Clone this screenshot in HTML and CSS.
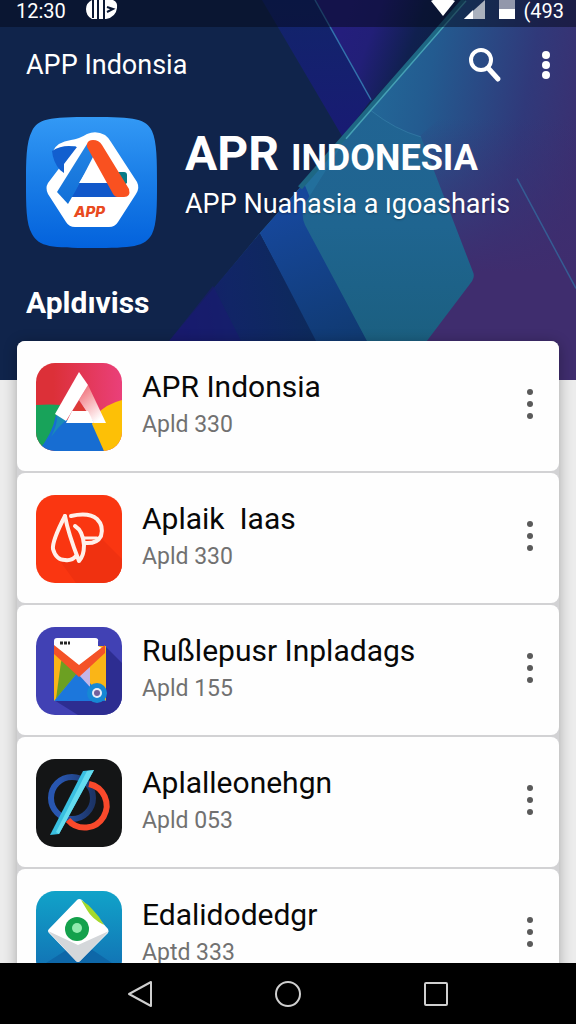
FILE: index.html
```html
<!DOCTYPE html>
<html lang="id">
<head>
  <meta charset="UTF-8">
  <meta name="viewport" content="width=device-width, initial-scale=1">
  <title>APP Indonsia</title>
  <link rel="stylesheet" href="styles.css">
</head>
<body>
  <main class="content">
    <header class="hero">
      <svg class="hero-bg" viewBox="0 0 576 419" preserveAspectRatio="none" aria-hidden="true">
        <defs>
          <linearGradient id="right" x1="330" y1="150" x2="576" y2="190" gradientUnits="userSpaceOnUse">
            <stop offset="0" stop-color="#226f9c"/>
            <stop offset="0.35" stop-color="#235b90"/>
            <stop offset="0.75" stop-color="#30397a"/>
            <stop offset="1" stop-color="#3b2f70"/>
          </linearGradient>
          <linearGradient id="purple" x1="0" y1="130" x2="0" y2="300" gradientUnits="userSpaceOnUse">
            <stop offset="0" stop-color="#3c2d70" stop-opacity="0"/>
            <stop offset="1" stop-color="#3f2d6e"/>
          </linearGradient>
          <linearGradient id="dark" x1="340" y1="40" x2="430" y2="70" gradientUnits="userSpaceOnUse">
            <stop offset="0" stop-color="#241e7c"/>
            <stop offset="0.3" stop-color="#221f78"/>
            <stop offset="0.75" stop-color="#10204f"/>
            <stop offset="1" stop-color="#0e2148"/>
          </linearGradient>
          <linearGradient id="band" x1="0" y1="0" x2="0" y2="160" gradientUnits="userSpaceOnUse">
            <stop offset="0" stop-color="#11256a"/>
            <stop offset="1" stop-color="#191a74"/>
          </linearGradient>
          <linearGradient id="teal" x1="0" y1="120" x2="0" y2="380" gradientUnits="userSpaceOnUse">
            <stop offset="0" stop-color="#216493"/>
            <stop offset="0.5" stop-color="#1f6590"/>
            <stop offset="1" stop-color="#1b5f80"/>
          </linearGradient>
          <linearGradient id="strip" x1="280" y1="240" x2="340" y2="380" gradientUnits="userSpaceOnUse">
            <stop offset="0" stop-color="#16479a"/>
            <stop offset="1" stop-color="#103a72"/>
          </linearGradient>
          <linearGradient id="low" x1="180" y1="350" x2="310" y2="330" gradientUnits="userSpaceOnUse">
            <stop offset="0" stop-color="#171a6a"/>
            <stop offset="0.4" stop-color="#112566"/>
            <stop offset="1" stop-color="#0d2a5c"/>
          </linearGradient>
        </defs>
        <rect width="576" height="419" fill="#10244b"/>
        <path d="M262 0H315L371 110L343 152Z" fill="url(#band)"/>
        <path d="M315 0H465L371 112Z" fill="url(#dark)"/>
        <path d="M465 0H576V419H168V380L260 257Z" fill="url(#right)"/>
        <path d="M420 150L440 130H576V419H420Z" fill="url(#purple)"/>
        <path d="M260 257L320 380H166Z" fill="url(#low)"/>
        <path d="M213 315L166 380H243Z" fill="#191a70" opacity="0.6"/>
        <path d="M260 257L304 202L372 380H318Z" fill="url(#strip)"/>
        <path d="M371 122Q395 143 421 151L473 300Q475 305 472 310L424 380H369L305 248Q301 239 304 226L345 154Z" fill="url(#teal)"/>
        <path d="M371 122Q395 143 421 151" fill="none" stroke="#3a86ac" opacity="0.6"/>
        <path d="M315 0L371 110" stroke="#3273ac" stroke-width="1.5"/>
        <path d="M464 0L300 207" stroke="#1e6784" stroke-width="5"/>
        <path d="M466 1L346 153" stroke="#46a1b6" stroke-width="1.5"/>
        <path d="M517 197L576 318" stroke="#355d94" stroke-width="1.5"/>
      </svg>

      <div class="status-bar">
        <span>12:30</span>
        <svg width="32" height="20" viewBox="0 0 32 20">
          <path d="M6 0H27Q32 2 31 8Q30 17 20 19H6Q0 16 0 9Q0 3 6 0Z" fill="#fff"/>
          <path d="M7 0V18M12 0V19M18 0V19" stroke="#0b1833" stroke-width="2"/>
          <path d="M21 7L27 9L21 12" fill="none" stroke="#0b1833" stroke-width="2"/>
        </svg>
        <svg class="status-signals" width="84" height="20" viewBox="0 0 84 20">
          <path d="M0 1L2 0H22L24 1L12 16Z" fill="#fff"/>
          <path d="M33 19L54 0V19Z" fill="#aab1bd"/>
          <path d="M33 19L42 10V19Z" fill="#fff"/>
          <path d="M68 0H84V19H68Z" fill="#9297ab"/>
          <path d="M68 9H84V19H68Z" fill="#fff"/>
        </svg>
        <span>(493</span>
      </div>

      <nav class="app-bar">
        <span class="app-name">APP Indonsia</span>
        <button class="icon-btn" aria-label="Cari">
          <svg width="34" height="36" viewBox="0 0 34 36">
            <circle cx="13" cy="13" r="10" fill="none" stroke="#fff" stroke-width="4"/>
            <path d="M20 21L30 32" stroke="#fff" stroke-width="5" stroke-linecap="round"/>
          </svg>
        </button>
        <button class="icon-btn" aria-label="Menu">
          <svg width="10" height="30" viewBox="0 0 10 30" fill="#fff">
            <circle cx="5" cy="5" r="4"/><circle cx="5" cy="15" r="4"/><circle cx="5" cy="25" r="4"/>
          </svg>
        </button>
      </nav>

      <section class="intro">
        <svg class="logo" width="132" height="132" viewBox="0 0 132 132">
          <defs>
            <linearGradient id="logoBg" x1="0" y1="0" x2="0" y2="1">
              <stop offset="0" stop-color="#3399f5"/>
              <stop offset="0.45" stop-color="#1b7fe8"/>
              <stop offset="1" stop-color="#0362dc"/>
            </linearGradient>
            <linearGradient id="logoLeg" x1="0" y1="0" x2="0" y2="1">
              <stop offset="0" stop-color="#2484e4"/>
              <stop offset="1" stop-color="#1170d8"/>
            </linearGradient>
          </defs>
          <path d="M66 0C110 0 120 2 126 14C131 25 131 45 131 66C131 88 131 107 126 117C119 130 106 131 66 131C26 131 13 130 6 117C0 107 0 88 0 66C0 45 0 25 6 14C12 2 22 0 66 0Z" fill="url(#logoBg)"/>
          <path d="M27 34Q31 25 45 23Q53 22 61 17Q70 13 79 18Q83 21 85 25L111 65Q114 71 110 77L92 105Q89 110 83 110H49Q43 110 40 105L22 77Q19 71 22 66L50 29Z" fill="#fff"/>
          <path d="M26 34Q37 27 51 30L38 47V56L34 53Q27 45 26 34Z" fill="#125fcf"/>
          <path d="M84 55H98Q101 55 101 58V66L95 70Z" fill="#087b86"/>
          <path d="M53 66H86L92 80H45Z" fill="#1158ca"/>
          <path d="M61 27L68 38L50 73L42 87L31 75Z" fill="url(#logoLeg)"/>
          <path d="M67 43L53 66H81Z" fill="#fff"/>
          <path d="M61 27Q62 23 67 23Q73 23 76 28L103 72Q105 80 98 80H92Q88 80 86 75L61 30Z" fill="#f95120"/>
          <text class="logo-text" x="48" y="100">APP</text>
        </svg>
        <div class="intro-text">
          <h1 class="title">APR <span class="title-narrow">INDONESIA</span></h1>
          <p class="tagline">APP Nuahasia a ıgoasharis</p>
        </div>
      </section>

      <h2 class="section-title">Apldıviss</h2>
    </header>

    <ul class="app-list">
      <li class="app-card">
        <svg class="app-icon" viewBox="0 0 86 88">
          <defs>
            <linearGradient id="red1"><stop offset="0.2" stop-color="#dc3038"/><stop offset="1" stop-color="#ea407a"/></linearGradient>
            <linearGradient id="leg1" x1="0" y1="0" x2="0.6" y2="1"><stop offset="0" stop-color="#ef626c"/><stop offset="1" stop-color="#fff"/></linearGradient>
          </defs>
          <rect width="86" height="88" fill="url(#red1)"/>
          <path d="M0 42Q14 41 25 42L24 57L4 88H0Z" fill="#18a35a"/>
          <path d="M20 52L30 57H57L68 88H2Q16 72 20 52Z" fill="#176dd2"/>
          <path d="M20 52L30 57Q22 64 15 74Q23 58 20 52Z" fill="#198cb8"/>
          <path d="M86 37Q70 41 60 52L56 61L68 88H86Z" fill="#fdc006"/>
          <path d="M52 22L70 60H58L43 37Z" fill="url(#leg1)"/>
          <path d="M43 38L50 48H37Z" fill="#dc3b35"/>
          <path d="M36 48H52L58 60H30Z" fill="#fff"/>
          <path d="M43 9L52 22L30 58L19 51Z" fill="#fff"/>
        </svg>
        <div class="app-info">
          <h3 class="app-title">APR Indonsia</h3>
          <p class="app-sub">Apld 330</p>
        </div>
        <button class="more-btn" aria-label="Opsi"><i></i><i></i><i></i></button>
      </li>

      <li class="app-card">
        <svg class="app-icon" viewBox="0 0 86 88">
          <rect width="86" height="88" fill="#fa3611"/>
          <path d="M64 42L86 64V88H40L24 66L44 67L50 48Z" fill="#f03110"/>
          <g fill="none" stroke="#fff0ea" stroke-width="4" stroke-linecap="round" stroke-linejoin="round">
            <path d="M29 21Q16 46 17 54Q20 65 29 65Q36 66 40 61"/>
            <path d="M29 21Q32 38 43 66Q48 61 48 50Q47 36 39 31"/>
            <path d="M35 21Q53 17 61 24Q68 31 65 41Q61 49 49 48"/>
            <path d="M48 43H61" stroke-width="3"/>
          </g>
        </svg>
        <div class="app-info">
          <h3 class="app-title">Aplaik&nbsp; Iaas</h3>
          <p class="app-sub">Apld 330</p>
        </div>
        <button class="more-btn" aria-label="Opsi"><i></i><i></i><i></i></button>
      </li>

      <li class="app-card">
        <svg class="app-icon" viewBox="0 0 86 88">
          <rect width="86" height="88" fill="#4141b4"/>
          <path d="M70 20L86 36V88H42L18 73Z" fill="#2d2d91"/>
          <path d="M18 19H70V74H18Z" fill="#fab517"/>
          <path d="M28 28L44 43L20 72L25 35Z" fill="#6ca022"/>
          <path d="M18 74L42 45L58 60L70 74Z" fill="#1c77dc"/>
          <path d="M42 47L54 40V60Z" fill="#c3b6e8"/>
          <path d="M18 14Q18 11 21 11H59Q63 11 62 15V19L66 21L43 42L18 20Z" fill="#fff"/>
          <path d="M18 18L43 38L69 18V26L43 50L18 27Z" fill="#f45227"/>
          <path d="M24 16H34" stroke="#252525" stroke-width="3" stroke-dasharray="3 1"/>
          <circle cx="61" cy="66" r="10" fill="#1688d4"/>
          <circle cx="61" cy="66" r="5" fill="#e7edfa"/>
          <circle cx="61" cy="66" r="3" fill="#73609c"/>
        </svg>
        <div class="app-info">
          <h3 class="app-title">Rußlepusr Inpladags</h3>
          <p class="app-sub">Apld 155</p>
        </div>
        <button class="more-btn" aria-label="Opsi"><i></i><i></i><i></i></button>
      </li>

      <li class="app-card">
        <svg class="app-icon" viewBox="0 0 86 88">
          <defs>
            <linearGradient id="ring4"><stop offset="0.2" stop-color="#2856b0"/><stop offset="1" stop-color="#1c3466"/></linearGradient>
          </defs>
          <rect width="86" height="88" fill="#141516"/>
          <circle cx="36" cy="39" r="21" fill="none" stroke="url(#ring4)" stroke-width="6"/>
          <path d="M53 25A22 22 0 1 1 32 61" fill="none" stroke="#f9492b" stroke-width="6"/>
          <path d="M47 12L58 11L23 75L14 76Z" fill="#39bfe0"/>
          <path d="M51 12L58 11L23 75L20 73Z" fill="#64dcef"/>
        </svg>
        <div class="app-info">
          <h3 class="app-title">Aplalleonehgn</h3>
          <p class="app-sub">Apld 053</p>
        </div>
        <button class="more-btn" aria-label="Opsi"><i></i><i></i><i></i></button>
      </li>

      <li class="app-card">
        <svg class="app-icon" viewBox="0 0 86 88">
          <defs>
            <linearGradient id="bg5" x1="0" y1="0" x2="0" y2="1"><stop offset="0" stop-color="#11a3c9"/><stop offset="1" stop-color="#126cb2"/></linearGradient>
          </defs>
          <rect width="86" height="88" fill="url(#bg5)"/>
          <path d="M10 72L32 58L42 71L55 58L76 72V88H10Z" fill="#0e67a8"/>
          <path d="M41 9Q43 7 46 9L72 38Q73 40 72 42L44 70Q42 72 40 70L13 42Q11 40 13 38Z" fill="#fff"/>
          <path d="M12 40L42 54L73 40L44 70Q42 72 40 70Z" fill="#d4d7da"/>
          <path d="M45 9Q52 13 57 19Q64 26 68 34Q56 28 51 19Z" fill="#a5d92c"/>
          <circle cx="41" cy="38" r="12" fill="#14a14c"/>
          <circle cx="41" cy="37" r="5" fill="#91ebae"/>
        </svg>
        <div class="app-info">
          <h3 class="app-title">Edalidodedgr</h3>
          <p class="app-sub">Aptd 333</p>
        </div>
        <button class="more-btn" aria-label="Opsi"><i></i><i></i><i></i></button>
      </li>
    </ul>
  </main>

  <footer class="nav-bar">
    <button class="nav-btn" aria-label="Kembali">
      <svg width="28" height="28" viewBox="0 0 28 28"><path d="M3 14L25 2V26Z"/></svg>
    </button>
    <button class="nav-btn" aria-label="Beranda">
      <svg width="28" height="28" viewBox="0 0 28 28"><circle cx="14" cy="14" r="12"/></svg>
    </button>
    <button class="nav-btn" aria-label="Terbaru">
      <svg width="28" height="28" viewBox="0 0 28 28"><rect x="3" y="3" width="22" height="22" rx="1"/></svg>
    </button>
  </footer>
</body>
</html>
```

FILE: styles.css
```css
* {
  box-sizing: border-box;
}

body {
  margin: 0;
  height: 100vh;
  display: flex;
  flex-direction: column;
  font-family: Roboto, "Liberation Sans", sans-serif;
  background: #ececec;
}

h1, h2, h3, p, ul {
  margin: 0;
  padding: 0;
}

button {
  padding: 0;
  border: none;
  background: none;
  cursor: pointer;
}

svg {
  display: block;
}

.content {
  flex: 1;
  min-height: 0;
  overflow-y: auto;
  scrollbar-width: none;
}

/* header */
.hero {
  position: relative;
  z-index: 0;
  height: 380px;
  color: white;
  overflow: hidden;
}

.hero-bg {
  position: absolute;
  inset: 0;
  z-index: -1;
  width: 100%;
  height: 100%;
}

.status-bar {
  display: flex;
  align-items: flex-start;
  height: 27px;
  padding: 0 12px 0 16px;
  gap: 20px;
  font-size: 20px;
  line-height: 22px;
  background: rgba(4, 8, 25, 0.5);
}

.status-signals {
  margin-left: auto;
  margin-right: -12px;
}

.app-bar {
  display: flex;
  align-items: center;
  height: 76px;
  padding: 0 24px 0 26px;
}

.app-name {
  flex: 1;
  font-size: 27px;
}

.icon-btn {
  display: flex;
  justify-content: center;
  min-width: 12px;
  margin-left: 38px;
}

.intro {
  display: flex;
  align-items: center;
  gap: 27px;
  padding: 14px 26px 0;
}

.intro-text {
  padding-bottom: 14px;
}

.logo {
  flex-shrink: 0;
}

.logo-text {
  font-family: Inter, sans-serif;
  font-size: 15px;
  font-weight: 800;
  font-style: italic;
  fill: #e94a20;
}

.title {
  font-size: 48px;
  line-height: 52px;
  font-weight: 700;
  white-space: nowrap;
}

.title-narrow {
  font-size: 36px;
}

.tagline {
  font-size: 27px;
  line-height: 40px;
  white-space: nowrap;
  text-shadow: 0 1px 2px rgba(0, 0, 0, 0.3);
}

.section-title {
  padding: 34px 26px 0;
  font-size: 30px;
  line-height: 40px;
  font-weight: 700;
}

/* list */
.app-list {
  position: relative;
  z-index: 1;
  margin: -39px 17px 0;
  list-style: none;
  border-radius: 8px;
  background: #d2d2d4;
  box-shadow: 0 2px 14px rgba(0, 0, 0, 0.3);
}

.app-card {
  display: flex;
  align-items: center;
  height: 130px;
  margin-bottom: 2px;
  padding: 0 24px 0 19px;
  gap: 20px;
  background: #fefefe;
  border-radius: 8px;
}

.app-icon {
  flex-shrink: 0;
  width: 86px;
  height: 88px;
  margin-top: 2px;
  border-radius: 19px;
}

.app-info {
  flex: 1;
  min-width: 0;
  padding-bottom: 2px;
}

.app-title {
  font-size: 30px;
  line-height: 40px;
  font-weight: 400;
  color: #080808;
}

.app-sub {
  font-size: 23px;
  line-height: 36px;
  color: #717171;
}

.more-btn {
  display: flex;
  flex-direction: column;
  align-items: center;
  gap: 6px;
  width: 10px;
  padding-bottom: 4px;
}

.more-btn i {
  width: 6px;
  height: 6px;
  border-radius: 50%;
  background: #5a5a5a;
}

/* bottom navigation */
.nav-bar {
  display: flex;
  align-items: center;
  justify-content: center;
  gap: 100px;
  height: 61px;
  background: black;
}

.nav-btn {
  width: 48px;
  height: 48px;
  display: flex;
  align-items: center;
  justify-content: center;
}

.nav-btn svg {
  fill: none;
  stroke: #cfcfcf;
  stroke-width: 2;
  stroke-linejoin: round;
}
```
